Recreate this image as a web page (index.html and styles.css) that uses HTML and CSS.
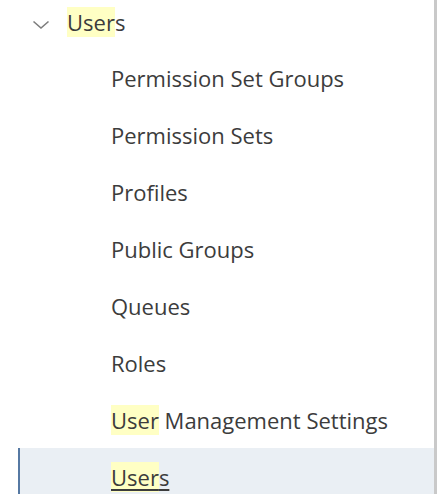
FILE: index.html
```html
<!DOCTYPE html>
<html>
<head>
<title>Setup</title>
<link rel="stylesheet" href="styles.css">
</head>
<body>
<div class="panel">
    <div class="node">
        <span class="chev">
            <svg width="18" height="11" viewBox="0 0 18 11"><path d="M1.5 2.5 L9 9 L16.5 2.5" fill="none" stroke="#7d7d7d" stroke-width="1.6"/></svg>
        </span>
        <span class="label"><mark>User</mark>s</span>
    </div>
    <ul class="children">
        <li><a>Permission Set Groups</a></li>
        <li><a>Permission Sets</a></li>
        <li><a>Profiles</a></li>
        <li><a>Public Groups</a></li>
        <li><a>Queues</a></li>
        <li><a>Roles</a></li>
        <li><a><mark>User</mark> Management Settings</a></li>
        <li class="selected"><a><u><mark>User</mark>s</u></a></li>
    </ul>
</div>
</body>
</html>
```

FILE: styles.css
```css
* {
    margin: 0;
    padding: 0;
    list-style: none;
    text-decoration: none;
    box-sizing: border-box;
}

body {
    font-family: "Open Sans", "Noto Sans", sans-serif;
    font-size: 22px;
    color: #3c3c3c;
    background: #fff;
}

.panel {
    width: 437px;
    height: 494px;
    border-right: 3px solid #c9c9c9;
    overflow: hidden;
}

mark {
    background: #ffffc4;
    color: inherit;
}

.node {
    display: flex;
    align-items: center;
    height: 44px;
}

.node .chev {
    width: 67px;
    display: flex;
    padding-left: 32px;
    padding-top: 4px;
}

.children {
    padding-top: 5px;
}

.children li {
    height: 57px;
    display: flex;
    align-items: center;
}

.children li a {
    display: block;
    width: 100%;
    padding-left: 111px;
    color: #3c3c3c;
}

.children li.selected {
    margin-left: 18px;
    border-left: 2px solid #5679a3;
    background: #eaeff4;
}

.children li.selected a {
    padding-left: 91px;
}

.children li.selected u {
    text-decoration: underline;
    text-decoration-thickness: 2px;
    text-underline-offset: 3px;
}
```
